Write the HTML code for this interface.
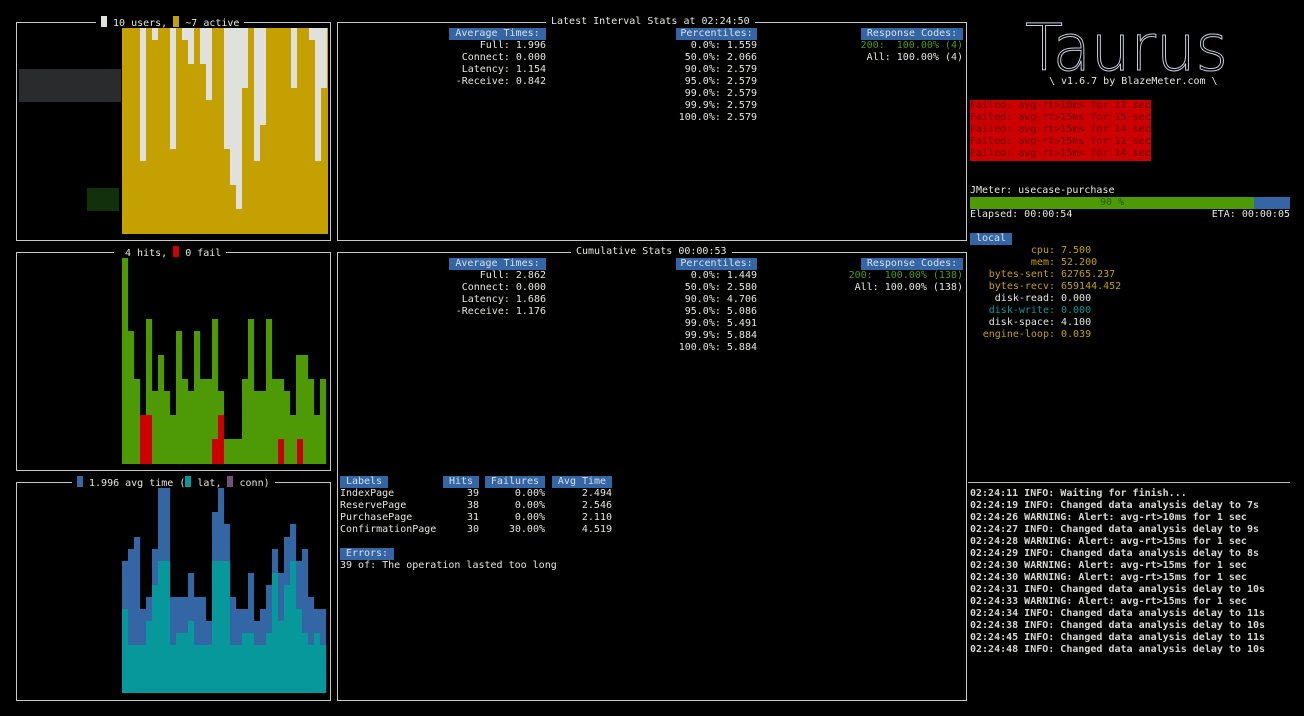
<!DOCTYPE html>
<html><head><meta charset="utf-8"><style>
*{margin:0;padding:0;box-sizing:border-box}
body{width:1304px;height:716px;background:#000;position:relative;overflow:hidden;font-family:"DejaVu Sans Mono","Liberation Mono",monospace;font-size:10px;color:#e6e6e0}
.t{position:absolute;white-space:pre;line-height:12px;height:12px}
.box{position:absolute;border:1.5px solid #c8c8c8}
.lab{position:absolute;background:#3465a4;color:#d8e0ea;white-space:pre;line-height:12px;height:12px;text-align:center}
.r{text-align:right}
.g{color:#4e9a06}.y{color:#c4a000}.c{color:#06989a}
.ttl{position:absolute;background:#000;white-space:pre;line-height:12px;height:12px;padding:0 5px}
.sq{display:inline-block;width:6px;height:11px;vertical-align:-1px}
.col{position:absolute;line-height:12px;white-space:pre;text-align:right}
</style></head><body>

<div class="box" style="left:16px;top:22px;width:315px;height:219px"></div>
<div class="box" style="left:337px;top:22px;width:630px;height:219px"></div>
<div class="box" style="left:16px;top:252px;width:315px;height:219px"></div>
<div class="box" style="left:337px;top:252px;width:630px;height:449px"></div>
<div class="box" style="left:16px;top:482px;width:315px;height:219px"></div>

<div style="position:absolute;left:19px;top:69px;width:102px;height:33px;background:#2a2b2d"></div>
<div style="position:absolute;left:87px;top:188px;width:32px;height:23px;background:#12300c"></div>

<svg id="ch" style="position:absolute;left:0;top:0" width="1304" height="716"></svg>

<div class="ttl" style="left:96px;top:16px"><span class="sq" style="background:#e0e0dc"></span> 10 users, <span class="sq" style="background:#c4a000"></span> ~7 active</div>
<div class="ttl" style="left:114px;top:246px"> 4 hits, <span class="sq" style="background:#cc0000"></span> 0 fail</div>
<div class="ttl" style="left:72px;top:476px"><span class="sq" style="background:#3465a4"></span> 1.996 avg time (<span class="sq" style="background:#06989a"></span> lat, <span class="sq" style="background:#75507b"></span> conn)</div>

<div class="ttl" style="left:546px;top:16px">Latest Interval Stats at 02:24:50</div>
<div class="ttl" style="left:571px;top:246px">Cumulative Stats 00:00:53</div>

<!-- interval -->
<div class="lab" style="left:449px;top:28px;width:97px">Average Times:</div>
<div class="col" style="left:400px;top:40px;width:146px">Full: 1.996
Connect: 0.000
Latency: 1.154
-Receive: 0.842</div>
<div class="lab" style="left:676px;top:28px;width:81px">Percentiles:</div>
<div class="col" style="left:640px;top:40px;width:117px">0.0%: 1.559
50.0%: 2.066
90.0%: 2.579
95.0%: 2.579
99.0%: 2.579
99.9%: 2.579
100.0%: 2.579</div>
<div class="lab" style="left:861px;top:28px;width:102px">Response Codes:</div>
<div class="col" style="left:800px;top:40px;width:163px"><span class="g">200:  100.00% (4)</span>
All: 100.00% (4)</div>

<!-- cumulative -->
<div class="lab" style="left:449px;top:258px;width:97px">Average Times:</div>
<div class="col" style="left:400px;top:270px;width:146px">Full: 2.862
Connect: 0.000
Latency: 1.686
-Receive: 1.176</div>
<div class="lab" style="left:676px;top:258px;width:81px">Percentiles:</div>
<div class="col" style="left:640px;top:270px;width:117px">0.0%: 1.449
50.0%: 2.580
90.0%: 4.706
95.0%: 5.086
99.0%: 5.491
99.9%: 5.884
100.0%: 5.884</div>
<div class="lab" style="left:861px;top:258px;width:102px">Response Codes:</div>
<div class="col" style="left:760px;top:270px;width:203px"><span class="g">200:  100.00% (138)</span>
All: 100.00% (138)</div>

<div class="lab" style="left:340px;top:476px;width:48px">Labels</div>
<div class="lab" style="left:443px;top:476px;width:36px">Hits</div>
<div class="lab" style="left:485px;top:476px;width:60px">Failures</div>
<div class="lab" style="left:552px;top:476px;width:60px">Avg Time</div>
<div style="position:absolute;left:340px;top:488px;line-height:12px;white-space:pre">IndexPage
ReservePage
PurchasePage
ConfirmationPage</div>
<div class="col" style="left:440px;top:488px;width:39px">39
38
31
30</div>
<div class="col" style="left:485px;top:488px;width:60px">0.00%
0.00%
0.00%
30.00%</div>
<div class="col" style="left:552px;top:488px;width:60px">2.494
2.546
2.110
4.519</div>
<div class="lab" style="left:340px;top:548px;width:54px">Errors:</div>
<div class="t" style="left:340px;top:560px">39 of: The operation lasted too long</div>

<!-- right -->
<svg style="position:absolute;left:1000px;top:14px" width="260" height="64"><text x="25" y="56" textLength="203" lengthAdjust="spacingAndGlyphs" font-family="DejaVu Sans ExtraLight, DejaVu Sans, sans-serif" font-weight="200" font-size="64" fill="none" stroke="#c6cede" stroke-width="1">Taurus</text></svg>
<div class="t" style="left:1049px;top:76px">\ v1.6.7 by BlazeMeter.com \</div>
<div style="position:absolute;left:970px;top:100px;width:181px;height:61px;background:#cc0000"></div>
<div style="position:absolute;left:970px;top:100px;line-height:12px;white-space:pre;color:#6a0000">Failed: avg-rt>10ms for 11 sec
Failed: avg-rt>15ms for 15 sec
Failed: avg-rt>15ms for 14 sec
Failed: avg-rt>15ms for 11 sec
Failed: avg-rt>15ms for 14 sec</div>
<div class="t" style="left:970px;top:185px">JMeter: usecase-purchase</div>
<div style="position:absolute;left:970px;top:197px;width:284px;height:12px;background:#4e9a06;color:#2a5a00;text-align:center;line-height:12px">90 %</div>
<div style="position:absolute;left:1254px;top:197px;width:36px;height:12px;background:#3465a4"></div>
<div class="t" style="left:970px;top:209px">Elapsed: 00:00:54</div>
<div class="t r" style="left:1150px;top:209px;width:140px">ETA: 00:00:05</div>
<div class="lab" style="left:970px;top:233px;width:42px">local</div>
<div class="col" style="left:960px;top:245px;width:95px"><span class="y">cpu:</span>
<span class="y">mem:</span>
<span class="y">bytes-sent:</span>
<span class="y">bytes-recv:</span>
disk-read:
<span class="c">disk-write:</span>
disk-space:
<span class="y">engine-loop:</span></div>
<div style="position:absolute;left:1061px;top:245px;line-height:12px;white-space:pre"><span class="y">7.500</span>
<span class="y">52.200</span>
<span class="y">62765.237</span>
<span class="y">659144.452</span>
0.000
<span class="c">0.000</span>
4.100
<span class="y">0.039</span></div>

<div style="position:absolute;left:968px;top:482px;width:322px;height:1px;background:#bbb"></div>
<div style="position:absolute;left:970px;top:488px;line-height:12px;white-space:pre;font-weight:bold;color:#d8d8d4">02:24:11 INFO: Waiting for finish...
02:24:19 INFO: Changed data analysis delay to 7s
02:24:26 WARNING: Alert: avg-rt>10ms for 1 sec
02:24:27 INFO: Changed data analysis delay to 9s
02:24:28 WARNING: Alert: avg-rt>15ms for 1 sec
02:24:29 INFO: Changed data analysis delay to 8s
02:24:30 WARNING: Alert: avg-rt>15ms for 1 sec
02:24:30 WARNING: Alert: avg-rt>15ms for 1 sec
02:24:31 INFO: Changed data analysis delay to 10s
02:24:33 WARNING: Alert: avg-rt>15ms for 1 sec
02:24:34 INFO: Changed data analysis delay to 11s
02:24:38 INFO: Changed data analysis delay to 10s
02:24:45 INFO: Changed data analysis delay to 11s
02:24:48 INFO: Changed data analysis delay to 10s</div>

<script>
var s=document.getElementById('ch'),o='';
function R(x,y,w,h,c){if(h>0)o+='<rect x="'+x+'" y="'+y+'" width="'+w+'" height="'+h+'" fill="'+c+'"/>';}
R(122,28,206,206,'#c4a000');
[[140,161],[152,40],[170,149],[182,40],[188,64],[200,64],[206,100],[224,149],[230,185],[236,209],[242,88],[254,161],[260,125],[291,88],[309,40],[315,161],[321,88]].forEach(function(a){R(a[0],28,6,a[1]-28,'#e0e0dc');});
var g=[18,272,418,526,238,453,345,453,526,272,418,453,272,418,418,238,453,598,598,598,418,238,453,453,238,418,418,453,526,345,345,418,526,418];
g.forEach(function(z,i){var y=Math.round(z/3+240);R(122+i*6,y,6.1,464-y,'#4e9a06');});
[[140,415,12],[212,439,6],[218,415,6],[278,439,6],[297,439,6]].forEach(function(a){R(a[0],a[1],a[2],464-a[1],'#cc0000');});
var b=[[272,418],[236,526],[200,526],[418,526],[382,453],[236,345],[55,272],[55,272],[382,526],[382,490],[382,490],[310,453],[382,526],[382,526],[453,526],[127,272],[55,272],[163,272],[382,526],[418,526],[418,490],[310,490],[453,526],[418,526],[345,490],[236,310],[310,453],[200,345],[163,272],[272,418],[236,490],[382,526],[418,490],[418,526]];
b.forEach(function(a,i){var y1=Math.round(a[0]/3+470),y2=Math.round(a[1]/3+470);R(122+i*6,y1,6.1,693-y1,'#3465a4');R(122+i*6,y2,6.1,693-y2,'#06989a');});
s.innerHTML=o;
</script>
</body></html>
